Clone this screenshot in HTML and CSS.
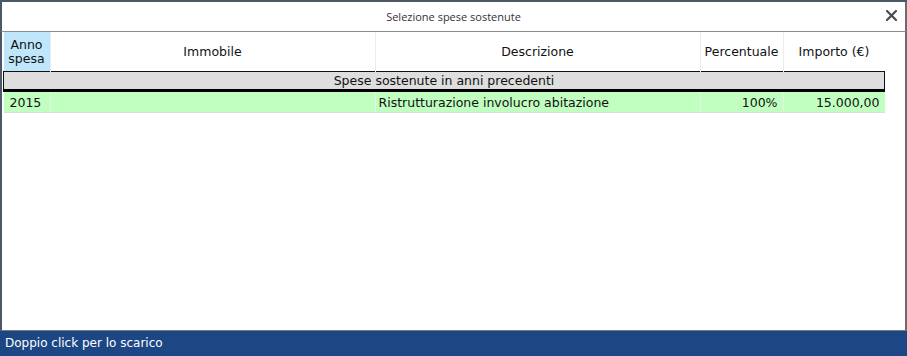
FILE: index.html
```html
<!DOCTYPE html>
<html lang="it">
<head>
    <meta charset="UTF-8">
    <title>Selezione spese sostenute</title>
    <link rel="stylesheet" href="styles.css">
</head>
<body>
    <div class="window">
        <div class="titlebar">
            <span class="title">Selezione spese sostenute</span>
            <svg class="close" width="11" height="11" viewBox="0 0 11 11">
                <path d="M1 1 L10 10 M10 1 L1 10" stroke="#4a4a4a" stroke-width="2.2" stroke-linecap="square"/>
            </svg>
        </div>
        <div class="content">
            <table class="grid">
                <thead>
                    <tr>
                        <th class="col-anno">Anno<br>spesa</th>
                        <th class="col-immobile">Immobile</th>
                        <th class="col-descr">Descrizione</th>
                        <th class="col-perc">Percentuale</th>
                        <th class="col-importo">Importo (€)</th>
                    </tr>
                </thead>
                <tbody>
                    <tr class="group">
                        <td colspan="5">Spese sostenute in anni precedenti</td>
                    </tr>
                    <tr class="row">
                        <td class="year">2015</td>
                        <td></td>
                        <td>Ristrutturazione involucro abitazione</td>
                        <td class="num">100%</td>
                        <td class="num">15.000,00</td>
                    </tr>
                </tbody>
            </table>
        </div>
        <div class="statusbar">Doppio click per lo scarico</div>
    </div>
</body>
</html>
```

FILE: styles.css
```css
body {
    margin: 0;
    padding: 0;
    background: #fff;
    font-family: "DejaVu Sans", Verdana, sans-serif;
}
.window {
    width: 907px;
    height: 356px;
    display: flex;
    flex-direction: column;
    box-sizing: border-box;
    border-top: 2px solid #4b5866;
}
.titlebar {
    height: 29px;
    display: flex;
    align-items: center;
    justify-content: center;
    position: relative;
    border-left: 2px solid #4b5866;
    border-right: 2px solid #6b6b6b;
    border-bottom: 1px solid #8c8c8c;
}
.title {
    font-family: "Open Sans", sans-serif;
    font-size: 11px;
    color: #333;
}
.close {
    position: absolute;
    right: 8px;
    top: 8px;
}
.content {
    flex: 1;
    border-left: 2px solid #4b5866;
    border-right: 2px solid #6b6b6b;
    border-bottom: 1px solid #7a7a7a;
    padding-left: 1px;
}
.grid {
    border-collapse: collapse;
    width: 882px;
    font-size: 12.5px;
    color: #111;
}
.grid th {
    font-weight: normal;
    height: 39px;
    padding: 0;
    line-height: 14px;
    border-left: 1px solid #ececec;
}
.grid th:first-child {
    border-left: none;
}
.col-anno {
    width: 46px;
    background: #bfe6fb;
}
.col-immobile {
    width: 324px;
}
.col-descr {
    width: 324px;
}
.col-perc {
    width: 82px;
}
.group td {
    height: 17px;
    padding: 0;
    text-align: center;
    background: #dedede;
    border-top: 1px solid #111;
    border-left: 1px solid #111;
    border-right: 1px solid #111;
    border-bottom: 3px solid #000;
}
.row td {
    height: 20px;
    padding: 0 3px;
    background: #c0ffc0;
    border-left: 1px solid #e4f4e4;
    border-bottom: 1px solid #dcdcdc;
}
.row td:first-child {
    border-left: none;
}
.row .year {
    padding-left: 6px;
}
.row .num {
    text-align: right;
    padding-right: 5px;
}
.statusbar {
    height: 25px;
    background: #1c4784;
    color: #fff;
    font-size: 12px;
    line-height: 25px;
    padding-left: 5px;
}
```
